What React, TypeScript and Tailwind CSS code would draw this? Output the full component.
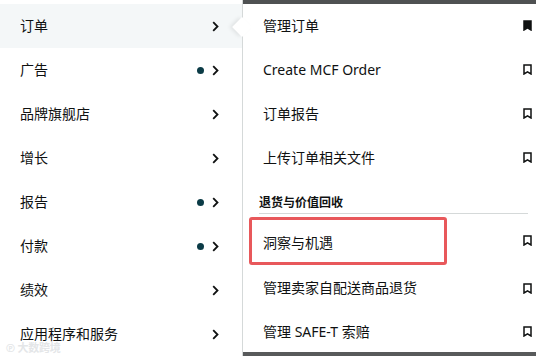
const FONT = { fontFamily: '"Noto Sans", "Noto Sans CJK SC", sans-serif' };

const leftItems = [
  { label: "订单", dot: false, active: true },
  { label: "广告", dot: true },
  { label: "品牌旗舰店", dot: false },
  { label: "增长", dot: false },
  { label: "报告", dot: true },
  { label: "付款", dot: true },
  { label: "绩效", dot: false },
  { label: "应用程序和服务", dot: false },
];

function Chevron() {
  return (
    <svg width="7" height="11" viewBox="0 0 7 11" fill="none">
      <path d="M1.2 1.2 L5.5 5.5 L1.2 9.8" stroke="#0f1111" strokeWidth="1.8" />
    </svg>
  );
}

function Bookmark({ filled }: { filled?: boolean }) {
  return (
    <svg width="9" height="11" viewBox="0 0 9 11" fill="none">
      <path
        d="M1 1 H8 V10 L4.5 7.8 L1 10 Z"
        fill={filled ? "#0f1111" : "none"}
        stroke="#0f1111"
        strokeWidth="1.5"
        strokeLinejoin="miter"
      />
    </svg>
  );
}

function Row({ label, filled, low }: { label: string; filled?: boolean; low?: boolean }) {
  return (
    <div className={`h-11 flex items-center pl-5 pr-[4px] ${low ? "pt-[3px]" : ""}`}>
      <span className="flex-1 text-sm text-[#0f1111]">{label}</span>
      <Bookmark filled={filled} />
    </div>
  );
}

export default function App() {
  return (
    <div className="relative flex w-[536px] h-[356px] bg-white overflow-hidden" style={FONT}>
      {/* left menu */}
      <div className="w-[242px] pt-1 flex-shrink-0">
        {leftItems.map(item => (
          <div
            key={item.label}
            className={`h-11 flex items-center pl-5 pr-[23px] ${item.active ? "bg-[#f4f7f8]" : ""}`}
          >
            <span className="flex-1 text-sm text-[#0f1111]">{item.label}</span>
            {item.dot && <span className="w-[7px] h-[7px] rounded-full bg-[#0b3b46] mr-[8px]" />}
            <Chevron />
          </div>
        ))}
      </div>

      {/* submenu */}
      <div className="relative flex-1 flex flex-col border-l border-[#d5d9d9]">
        <div className="absolute left-[-8px] top-[20px] w-[14px] h-[14px] rotate-45 bg-white shadow-[-2px_2px_4px_rgba(0,0,0,0.08)]" />
        <div className="h-[4px] bg-[#4f5152]" />
        <div className="relative">
          <Row label="管理订单" filled />
          <Row label="Create MCF Order" />
          <Row label="订单报告" />
          <Row label="上传订单相关文件" />
        </div>
        <div className="h-[34px] ml-4 mr-[8px] pt-[15px] border-b border-[#d5d9d9] text-xs leading-4 font-bold text-[#0f1111]">
          退货与价值回收
        </div>
        <div className="mt-[3px] h-12 flex items-center pl-[6px] pr-[4px]">
          <div className="w-[198px] h-12 flex items-center pl-[11px] pt-[4px] border-[3px] border-[#e8585b] rounded-[3px]">
            <span className="text-sm text-[#0f1111]">洞察与机遇</span>
          </div>
          <div className="flex-1" />
          <Bookmark />
        </div>
        <Row label="管理卖家自配送商品退货" low />
        <Row label="管理 SAFE-T 索赔" low />
        <div className="flex-1" />
        <div className="h-[4px] bg-[#585a5b]" />
      </div>

      <div className="absolute left-[6px] bottom-[2px] text-[11px] leading-3 font-bold text-[#e4e6e8] tracking-tight">
        ℗ 大数跨境
      </div>
    </div>
  );
}
